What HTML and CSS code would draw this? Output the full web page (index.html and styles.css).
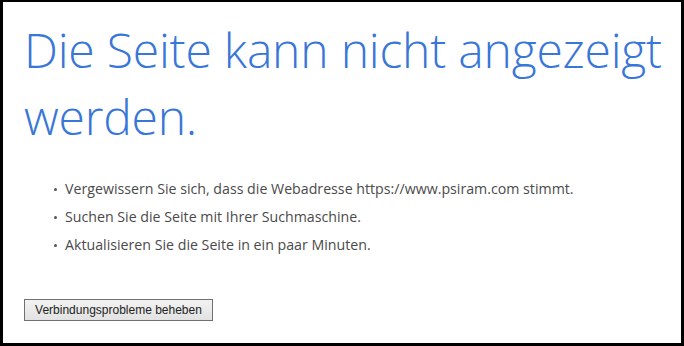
FILE: index.html
```html
<!DOCTYPE html>
<html lang="de">
<head>
<meta charset="utf-8">
<title>Die Seite kann nicht angezeigt werden.</title>
<link rel="stylesheet" href="styles.css">
</head>
<body>
<div class="frame">
  <h1 class="title">Die Seite kann nicht angezeigt werden.</h1>
  <ul class="tips">
    <li>Vergewissern Sie sich, dass die Webadresse https://www.psiram.com stimmt.</li>
    <li>Suchen Sie die Seite mit Ihrer Suchmaschine.</li>
    <li>Aktualisieren Sie die Seite in ein paar Minuten.</li>
  </ul>
  <button class="fix" type="button">Verbindungsprobleme beheben</button>
</div>
</body>
</html>
```
FILE: styles.css
```css
html, body {
  margin: 0;
  padding: 0;
  background: #000;
}
.frame {
  box-sizing: border-box;
  height: 346px;
  width: 684px;
  border-style: solid;
  border-color: #000;
  border-width: 2px 3px 3px 3px;
  background: #fff;
  padding: 14px 4px 0 21px;
  display: flex;
  flex-direction: column;
  align-items: flex-start;
}
.title {
  margin: 0;
  font-family: "Open Sans", "Noto Sans", sans-serif;
  font-weight: 300;
  font-size: 48px;
  letter-spacing: -0.2px;
  line-height: 67px;
  color: #3876d8;
}
.tips {
  margin: 25px 0 0 0;
  padding: 0 0 0 41px;
  font-family: "Open Sans", "Noto Sans", sans-serif;
  font-size: 14.2px;
  color: #4a4a4a;
  list-style: none;
}
.tips li {
  position: relative;
  line-height: 28px;
}
.tips li::before {
  content: "";
  position: absolute;
  left: -11px;
  top: 13px;
  width: 3px;
  height: 3px;
  background: #555;
  border-radius: 50%;
}
.fix {
  margin-top: 40px;
  width: 189px;
  height: 22px;
  padding: 0;
  font-family: "Liberation Sans", Arial, sans-serif;
  font-size: 12px;
  color: #222;
  background: linear-gradient(#f2f2f2, #e2e2e2);
  border: 1px solid #707070;
  border-radius: 0;
}
```
